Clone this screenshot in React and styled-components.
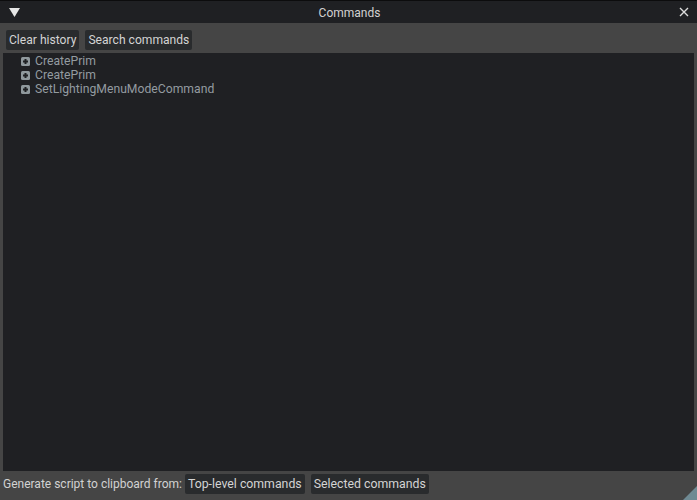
import React from "react";
import styled, { createGlobalStyle } from "styled-components";

const Global = createGlobalStyle`
  html, body { margin: 0; padding: 0; background: #454545; }
  body { font-family: Roboto, "Noto Sans", sans-serif; }
`;

const Window = styled.div`
  width: 697px;
  height: 500px;
  display: flex;
  flex-direction: column;
  background: #454545;
  position: relative;
  overflow: hidden;
`;

const TitleBar = styled.div`
  height: 23px;
  flex: none;
  background: #1f2023;
  border-top: 1px solid #0c0c0d;
  box-sizing: border-box;
  display: flex;
  align-items: center;
  padding: 0 8px 0 9px;
`;

const Title = styled.div`
  flex: 1;
  text-align: center;
  color: #d2d2d2;
  font-size: 12px;
  padding-top: 1px;
`;

const Toolbar = styled.div`
  height: 30px;
  flex: none;
  display: flex;
  align-items: flex-start;
  gap: 6px;
  padding: 7px 6px 0;
  box-sizing: border-box;
`;

const Button = styled.div`
  height: 20px;
  padding: 0 3px;
  display: flex;
  align-items: center;
  background: #292b2d;
  border-radius: 2px;
  color: #d4d4d4;
  font-size: ${(p) => p.$size || 12.1}px;
  white-space: nowrap;
`;

const Tree = styled.div`
  flex: 1;
  margin: 0 3px;
  background: #1f2023;
  padding-top: 1px;
  display: flex;
  flex-direction: column;
`;

const Row = styled.div`
  height: 14px;
  display: flex;
  align-items: center;
  padding-left: 18px;
  gap: 5px;
  color: #939ba0;
  font-size: 12.2px;
  white-space: nowrap;
`;

const Footer = styled.div`
  height: 29px;
  flex: none;
  display: flex;
  align-items: flex-start;
  padding: 3px 3px 0;
  box-sizing: border-box;
  gap: 6px;
  color: #d2d2d2;
  font-size: 12px;
`;

const FooterLabel = styled.span`
  margin-right: -3px;
  line-height: 20px;
`;

const Grip = styled.svg`
  position: absolute;
  right: 0;
  bottom: 0;
`;

const PlusBox = () => (
  <svg width="9" height="9" viewBox="0 0 9 9">
    <rect x="0" y="0" width="9" height="9" rx="1.5" fill="#8f989c" />
    <rect x="2" y="3.5" width="5" height="2" fill="#1f2023" />
    <rect x="3.5" y="2" width="2" height="5" fill="#1f2023" />
  </svg>
);

const items = ["CreatePrim", "CreatePrim", "SetLightingMenuModeCommand"];

export default function App() {
  return (
    <Window>
      <Global />
      <TitleBar>
        <svg width="11" height="9" viewBox="0 0 11 9">
          <polygon points="0,0 11,0 5.5,9" fill="#e6e6e6" />
        </svg>
        <Title>Commands</Title>
        <svg width="10" height="10" viewBox="0 0 10 10">
          <path d="M1 1 L9 9 M9 1 L1 9" stroke="#dcdcdc" strokeWidth="1.4" />
        </svg>
      </TitleBar>
      <Toolbar>
        <Button>Clear history</Button>
        <Button>Search commands</Button>
      </Toolbar>
      <Tree>
        {items.map((t, i) => (
          <Row key={i}>
            <PlusBox />
            <span>{t}</span>
          </Row>
        ))}
      </Tree>
      <Footer>
        <FooterLabel>Generate script to clipboard from:</FooterLabel>
        <Button $size={12.3}>Top-level commands</Button>
        <Button $size={12.3}>Selected commands</Button>
      </Footer>
      <Grip width="14" height="14" viewBox="0 0 14 14">
        <polygon points="14,0 14,14 0,14" fill="#6f8a93" />
      </Grip>
    </Window>
  );
}
